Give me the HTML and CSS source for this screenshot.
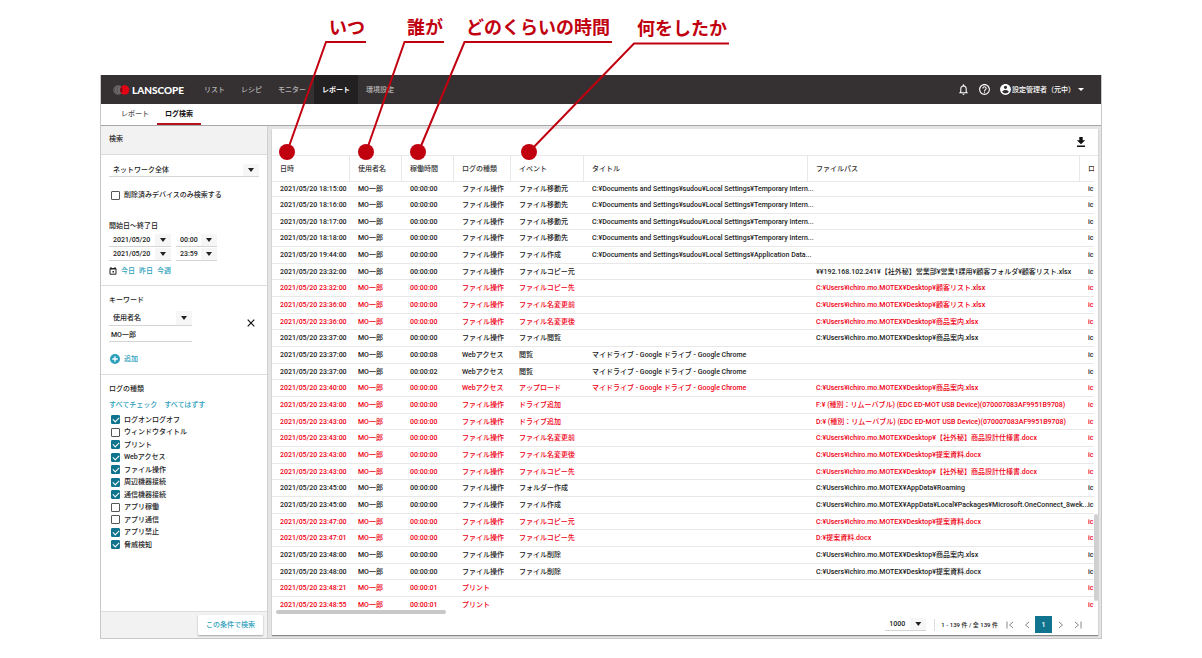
FILE: index.html
```html
<!DOCTYPE html>
<html lang="ja">
<head>
<meta charset="utf-8">
<title>LANSCOPE ログ検索</title>
<link rel="stylesheet" href="styles.css">
</head>
<body>
<div class="stage">
<div class="window">
  <header class="topbar">
    <div class="brand">
      <svg class="brand-mark" viewBox="0 0 17 10" aria-hidden="true">
        <circle cx="5" cy="5" r="4.700" fill="#6b696a"/>
        <path d="M3.800 1A4.700 4.700 0 0 0 3.800 9M6 1.200A4.700 4.700 0 0 0 6 8.800" fill="none" stroke="#454142" stroke-width=".6"/>
        <circle cx="11.700" cy="5" r="4.700" fill="#f00014"/>
        <path d="M8.350 1.700A4.700 4.700 0 0 1 8.350 8.300A4.700 4.700 0 0 1 8.350 1.700z" fill="#7a0f16"/>
        <path d="M10.800 1.200A4.700 4.700 0 0 1 10.800 8.800M13 1A4.700 4.700 0 0 1 13 9" fill="none" stroke="#b80c18" stroke-width=".6"/>
      </svg>
      <span class="brand-name">LANSCOPE</span>
    </div>
    <nav class="nav">
      <a href="#">リスト</a><a href="#">レシピ</a><a href="#">モニター</a><a href="#" class="active">レポート</a><a href="#">環境設定</a>
    </nav>
    <div class="account">
      <button class="icon-btn" aria-label="通知"><svg class="ic13" viewBox="0 0 24 24"><path fill="#fff" d="M12 22c1.100 0 2-.9 2-2h-4c0 1.100.9 2 2 2zm6-6v-5c0-3.070-1.630-5.640-4.500-6.320V4c0-.83-.67-1.500-1.500-1.500s-1.500.67-1.500 1.500v.68C7.640 5.360 6 7.920 6 11v5l-2 2v1h16v-1l-2-2zm-2 1H8v-6c0-2.480 1.510-4.500 4-4.500s4 2.020 4 4.500v6z"/></svg></button>
      <button class="icon-btn" aria-label="ヘルプ"><svg class="ic13" viewBox="0 0 24 24"><path fill="#fff" d="M11 18h2v-2h-2v2zm1-16C6.480 2 2 6.480 2 12s4.480 10 10 10 10-4.480 10-10S17.520 2 12 2zm0 18c-4.410 0-8-3.590-8-8s3.590-8 8-8 8 3.590 8 8-3.590 8-8 8zm0-14c-2.210 0-4 1.790-4 4h2c0-1.100.9-2 2-2s2 .9 2 2c0 2-3 1.750-3 5h2c0-2.250 3-2.500 3-5 0-2.210-1.790-4-4-4z"/></svg></button>
      <button class="user"><svg class="ic13" viewBox="0 0 24 24"><path fill="#fff" d="M12 2C6.480 2 2 6.480 2 12s4.480 10 10 10 10-4.480 10-10S17.520 2 12 2zm0 3c1.660 0 3 1.340 3 3s-1.340 3-3 3-3-1.340-3-3 1.340-3 3-3zm0 14.200c-2.500 0-4.710-1.280-6-3.220.03-1.990 4-3.080 6-3.080 1.990 0 5.970 1.090 6 3.080-1.290 1.940-3.500 3.220-6 3.220z"/></svg><span>設定管理者（元中）</span><svg class="caret" viewBox="0 0 6 3"><path d="M0 0h6L3 3z" fill="#fff"/></svg></button>
    </div>
  </header>
  <nav class="tabs"><a href="#">レポート</a><a href="#" class="active">ログ検索</a></nav>
  <div class="content">
    <aside class="side">
      <h2 class="side-title">検索</h2>
      <section class="block scope">
        <div class="select wide"><select aria-label="ネットワーク"><option>ネットワーク全体</option></select></div>
        <label class="check"><input type="checkbox"><span>削除済みデバイスのみ検索する</span></label>
        <div class="period">
          <h3>開始日〜終了日</h3>
          <div class="line"><div class="select date"><select aria-label="開始日"><option>2021/05/20</option></select></div><div class="select time"><select aria-label="開始時刻"><option>00:00</option></select></div></div>
          <div class="line"><div class="select date"><select aria-label="終了日"><option>2021/05/20</option></select></div><div class="select time"><select aria-label="終了時刻"><option>23:59</option></select></div></div>
          <div class="quick"><svg class="cal" viewBox="0 0 8 8"><path d="M1 1.500h6v5.700H1zM1 2h6" fill="none" stroke="#222"/><path d="M2 0v1.500M6 0v1.500" stroke="#222"/><path d="M3.500 4h1.500v1.500H3.500z" fill="#222"/></svg><a href="#">今日</a><a href="#">昨日</a><a href="#">今週</a></div>
        </div>
      </section>
      <section class="block keyword">
        <h3>キーワード</h3>
        <div class="kw">
          <div class="kw-fields">
            <div class="select key"><select aria-label="項目"><option>使用者名</option></select></div>
            <input class="text" type="text" value="MO一郎" aria-label="キーワード">
          </div>
          <button class="close" aria-label="削除"><svg viewBox="0 0 8 8"><path d="M.7.7l6.600 6.600M7.300.7L.7 7.300" stroke="#111" stroke-width="1.200"/></svg></button>
        </div>
        <button class="add"><svg viewBox="0 0 10 10"><circle cx="5" cy="5" r="5" fill="#2ba0bb"/><path d="M5 2.300v5.400M2.300 5h5.400" stroke="#fff" stroke-width="1.300"/></svg><span>追加</span></button>
      </section>
      <section class="block types">
        <h3>ログの種類</h3>
        <div class="bulk"><a href="#">すべてチェック</a><a href="#">すべてはずす</a></div>
        <div class="checks">
          <label class="check"><input type="checkbox" checked><span>ログオンログオフ</span></label>
          <label class="check"><input type="checkbox"><span>ウィンドウタイトル</span></label>
          <label class="check"><input type="checkbox" checked><span>プリント</span></label>
          <label class="check"><input type="checkbox" checked><span>Webアクセス</span></label>
          <label class="check"><input type="checkbox" checked><span>ファイル操作</span></label>
          <label class="check"><input type="checkbox" checked><span>周辺機器接続</span></label>
          <label class="check"><input type="checkbox" checked><span>通信機器接続</span></label>
          <label class="check"><input type="checkbox"><span>アプリ稼働</span></label>
          <label class="check"><input type="checkbox"><span>アプリ通信</span></label>
          <label class="check"><input type="checkbox" checked><span>アプリ禁止</span></label>
          <label class="check"><input type="checkbox" checked><span>脅威検知</span></label>
        </div>
      </section>
      <div class="side-foot"><button class="submit">この条件で検索</button></div>
    </aside>
    <main class="panel">
      <div class="tools"><button class="icon-btn" aria-label="ダウンロード"><svg class="dl" viewBox="0 0 10 10"><path d="M3.300 0h3.400v3.300H9.200L5 7.300.8 3.300h2.500zM1 8.400h8v1.500H1z" fill="#111"/></svg></button></div>
      <div class="grid">
        <div class="scroll">
        <table>
          <colgroup><col class="c-date"><col class="c-user"><col class="c-dur"><col class="c-type"><col class="c-event"><col class="c-title"><col class="c-path"><col class="c-id"></colgroup>
          <thead><tr><th>日時</th><th>使用者名</th><th>稼働時間</th><th>ログの種類</th><th>イベント</th><th>タイトル</th><th>ファイルパス</th><th>ロ</th></tr></thead>
          <tbody>
<tr><td>2021/05/20 18:15:00</td><td>MO一郎</td><td>00:00:00</td><td>ファイル操作</td><td>ファイル移動元</td><td>C:¥Documents and Settings¥sudou¥Local Settings¥Temporary Intern...</td><td></td><td>ic</td></tr>
<tr><td>2021/05/20 18:16:00</td><td>MO一郎</td><td>00:00:00</td><td>ファイル操作</td><td>ファイル移動先</td><td>C:¥Documents and Settings¥sudou¥Local Settings¥Temporary Intern...</td><td></td><td>ic</td></tr>
<tr><td>2021/05/20 18:17:00</td><td>MO一郎</td><td>00:00:00</td><td>ファイル操作</td><td>ファイル移動元</td><td>C:¥Documents and Settings¥sudou¥Local Settings¥Temporary Intern...</td><td></td><td>ic</td></tr>
<tr><td>2021/05/20 18:18:00</td><td>MO一郎</td><td>00:00:00</td><td>ファイル操作</td><td>ファイル移動先</td><td>C:¥Documents and Settings¥sudou¥Local Settings¥Temporary Intern...</td><td></td><td>ic</td></tr>
<tr><td>2021/05/20 19:44:00</td><td>MO一郎</td><td>00:00:00</td><td>ファイル操作</td><td>ファイル作成</td><td>C:¥Documents and Settings¥sudou¥Local Settings¥Application Data...</td><td></td><td>ic</td></tr>
<tr><td>2021/05/20 23:32:00</td><td>MO一郎</td><td>00:00:00</td><td>ファイル操作</td><td>ファイルコピー元</td><td></td><td>¥¥192.168.102.241¥【社外秘】営業部¥営業1課用¥顧客フォルダ¥顧客リスト.xlsx</td><td>ic</td></tr>
<tr class="alert"><td>2021/05/20 23:32:00</td><td>MO一郎</td><td>00:00:00</td><td>ファイル操作</td><td>ファイルコピー先</td><td></td><td>C:¥Users¥ichiro.mo.MOTEX¥Desktop¥顧客リスト.xlsx</td><td>ic</td></tr>
<tr class="alert"><td>2021/05/20 23:36:00</td><td>MO一郎</td><td>00:00:00</td><td>ファイル操作</td><td>ファイル名変更前</td><td></td><td>C:¥Users¥ichiro.mo.MOTEX¥Desktop¥顧客リスト.xlsx</td><td>ic</td></tr>
<tr class="alert"><td>2021/05/20 23:36:00</td><td>MO一郎</td><td>00:00:00</td><td>ファイル操作</td><td>ファイル名変更後</td><td></td><td>C:¥Users¥ichiro.mo.MOTEX¥Desktop¥商品案内.xlsx</td><td>ic</td></tr>
<tr><td>2021/05/20 23:37:00</td><td>MO一郎</td><td>00:00:00</td><td>ファイル操作</td><td>ファイル閲覧</td><td></td><td>C:¥Users¥ichiro.mo.MOTEX¥Desktop¥商品案内.xlsx</td><td>ic</td></tr>
<tr><td>2021/05/20 23:37:00</td><td>MO一郎</td><td>00:00:08</td><td>Webアクセス</td><td>閲覧</td><td>マイドライブ - Google ドライブ - Google Chrome</td><td></td><td>ic</td></tr>
<tr><td>2021/05/20 23:37:00</td><td>MO一郎</td><td>00:00:02</td><td>Webアクセス</td><td>閲覧</td><td>マイドライブ - Google ドライブ - Google Chrome</td><td></td><td>ic</td></tr>
<tr class="alert"><td>2021/05/20 23:40:00</td><td>MO一郎</td><td>00:00:00</td><td>Webアクセス</td><td>アップロード</td><td>マイドライブ - Google ドライブ - Google Chrome</td><td>C:¥Users¥ichiro.mo.MOTEX¥Desktop¥商品案内.xlsx</td><td>ic</td></tr>
<tr class="alert"><td>2021/05/20 23:43:00</td><td>MO一郎</td><td>00:00:00</td><td>ファイル操作</td><td>ドライブ追加</td><td></td><td>F:¥ (種別：リムーバブル) (EDC ED-MOT USB Device)(070007083AF9951B9708)</td><td>ic</td></tr>
<tr class="alert"><td>2021/05/20 23:43:00</td><td>MO一郎</td><td>00:00:00</td><td>ファイル操作</td><td>ドライブ追加</td><td></td><td>D:¥ (種別：リムーバブル) (EDC ED-MOT USB Device)(070007083AF9951B9708)</td><td>ic</td></tr>
<tr class="alert"><td>2021/05/20 23:43:00</td><td>MO一郎</td><td>00:00:00</td><td>ファイル操作</td><td>ファイル名変更前</td><td></td><td>C:¥Users¥ichiro.mo.MOTEX¥Desktop¥【社外秘】商品設計仕様書.docx</td><td>ic</td></tr>
<tr class="alert"><td>2021/05/20 23:43:00</td><td>MO一郎</td><td>00:00:00</td><td>ファイル操作</td><td>ファイル名変更後</td><td></td><td>C:¥Users¥ichiro.mo.MOTEX¥Desktop¥提案資料.docx</td><td>ic</td></tr>
<tr class="alert"><td>2021/05/20 23:43:00</td><td>MO一郎</td><td>00:00:00</td><td>ファイル操作</td><td>ファイルコピー先</td><td></td><td>C:¥Users¥ichiro.mo.MOTEX¥Desktop¥【社外秘】商品設計仕様書.docx</td><td>ic</td></tr>
<tr><td>2021/05/20 23:45:00</td><td>MO一郎</td><td>00:00:00</td><td>ファイル操作</td><td>フォルダー作成</td><td></td><td>C:¥Users¥ichiro.mo.MOTEX¥AppData¥Roaming</td><td>ic</td></tr>
<tr><td>2021/05/20 23:45:00</td><td>MO一郎</td><td>00:00:00</td><td>ファイル操作</td><td>ファイル作成</td><td></td><td>C:¥Users¥ichiro.mo.MOTEX¥AppData¥Local¥Packages¥Microsoft.OneConnect_8wek...</td><td>ic</td></tr>
<tr class="alert"><td>2021/05/20 23:47:00</td><td>MO一郎</td><td>00:00:00</td><td>ファイル操作</td><td>ファイルコピー元</td><td></td><td>C:¥Users¥ichiro.mo.MOTEX¥Desktop¥提案資料.docx</td><td>ic</td></tr>
<tr class="alert"><td>2021/05/20 23:47:01</td><td>MO一郎</td><td>00:00:00</td><td>ファイル操作</td><td>ファイルコピー先</td><td></td><td>D:¥提案資料.docx</td><td>ic</td></tr>
<tr><td>2021/05/20 23:48:00</td><td>MO一郎</td><td>00:00:00</td><td>ファイル操作</td><td>ファイル削除</td><td></td><td>C:¥Users¥ichiro.mo.MOTEX¥Desktop¥商品案内.xlsx</td><td>ic</td></tr>
<tr><td>2021/05/20 23:48:00</td><td>MO一郎</td><td>00:00:00</td><td>ファイル操作</td><td>ファイル削除</td><td></td><td>C:¥Users¥ichiro.mo.MOTEX¥Desktop¥提案資料.docx</td><td>ic</td></tr>
<tr class="alert"><td>2021/05/20 23:48:21</td><td>MO一郎</td><td>00:00:01</td><td>プリント</td><td></td><td></td><td></td><td>ic</td></tr>
<tr class="alert"><td>2021/05/20 23:48:55</td><td>MO一郎</td><td>00:00:01</td><td>プリント</td><td></td><td></td><td></td><td>ic</td></tr>
          </tbody>
        </table>
        </div>
        <div class="bar-x"></div>
        <div class="bar-y"></div>
      </div>
      <footer class="pager">
        <div class="select size"><select aria-label="表示件数"><option>1000</option></select></div>
        <span class="range">1 - 139 件 / 全 139 件</span>
        <div class="pages">
          <button aria-label="最初"><svg viewBox="0 0 8 8"><path d="M1 .5v7M7 1L3.500 4 7 7"/></svg></button>
          <button aria-label="前へ"><svg viewBox="0 0 8 8"><path d="M6 1L2.500 4 6 7"/></svg></button>
          <button class="current">1</button>
          <button aria-label="次へ"><svg viewBox="0 0 8 8"><path d="M2 1l3.500 3L2 7"/></svg></button>
          <button aria-label="最後"><svg viewBox="0 0 8 8"><path d="M1 1l3.500 3L1 7M7 .5v7"/></svg></button>
        </div>
      </footer>
    </main>
  </div>
</div>
<svg class="leaders" width="760" height="170" viewBox="0 0 760 170" aria-hidden="true">
  <g fill="none" stroke="#c1000f" stroke-width="2">
    <path d="M366 42H326L287 152"/><path d="M444 42H404.500L366 152"/><path d="M612 42H464.500L418.500 152"/><path d="M729 43.500H634L529 152"/>
  </g>
  <g fill="#c1000f"><circle cx="287" cy="152" r="8"/><circle cx="366" cy="152" r="8"/><circle cx="418" cy="152" r="8"/><circle cx="529" cy="152" r="8"/></g>
</svg>
<span class="note note-when">いつ</span>
<span class="note note-who">誰が</span>
<span class="note note-long">どのくらいの時間</span>
<span class="note note-what">何をしたか</span>
</div>
</body>
</html>
```
FILE: styles.css
```css
* { box-sizing: border-box; }
body {
  margin: 0;
  background: #fff;
  color: #222;
  font: 500 7px/12px Roboto, "Noto Sans CJK JP", sans-serif;
}
button, input, select { font: inherit; color: inherit; margin: 0; padding: 0; border: 0; background: none; border-radius: 0; }
button { cursor: pointer; }
a { color: inherit; text-decoration: none; }
h2, h3 { margin: 0; font: inherit; }
svg { display: block; flex: none; }

.stage { position: relative; min-height: 100vh; padding: 75px 100px 19px; display: flex; }
.window { flex: 1; min-width: 0; display: flex; flex-direction: column; border: 1px solid #c8c8c8; border-top: 0; background: #e4e4e4; }

.topbar { display: flex; align-items: stretch; height: 29px; background: #353132; color: #fff; }
.brand { display: flex; align-items: center; gap: 2px; width: 95px; padding-left: 12px; }
.brand-mark { width: 17px; height: 10px; }
.brand-name { font: 900 10px/12px Lato, sans-serif; }
.nav { display: flex; color: #b5b3b3; }
.nav a { display: flex; align-items: center; padding: 0 8px; }
.nav .active { background: #232021; color: #fff; font-weight: 700; }
.account { display: flex; align-items: center; gap: 8px; margin-left: auto; padding-right: 17px; }
.icon-btn { display: block; }
.ic13 { width: 13px; height: 13px; }
.user { display: flex; align-items: center; }
.caret { width: 6px; height: 3px; margin-left: 3px; }

.tabs { display: flex; height: 22px; padding-left: 12px; background: #fff; border-bottom: 1px solid #a8a8a8; color: #555; }
.tabs a { display: flex; align-items: center; padding: 0 8px; border-bottom: 2px solid transparent; }
.tabs .active { color: #111; font-weight: 700; border-color: #b5121b; }

.content { flex: 1; display: flex; min-height: 0; }
.side { display: flex; flex-direction: column; width: 167px; background: #fff; border-right: 1px solid #d0d0d0; }
.side-title { height: 29px; padding: 7px 8px; background: #f2f2f2; border-bottom: 1px solid #dcdcdc; }
.block { padding: 8px; border-bottom: 1px solid #dcdcdc; }
.select { display: grid; border-bottom: 1px solid #d4d4d4; background: linear-gradient(#f6f6f6, #f6f6f6) right / 16px 100% no-repeat; }
.select select { grid-area: 1 / 1; appearance: none; width: 100%; height: 12px; padding-left: 4px; outline: 0; }
.select::after {
  content: ""; grid-area: 1 / 1; justify-self: end; width: 16px; height: 12px; pointer-events: none;
  background: #222; clip-path: polygon(5px 4px, 11px 4px, 8px 8px);
}
.wide { width: 150px; }
.date { width: 62px; }
.time { width: 41px; }
.key { width: 83px; padding: 1px 0; }
.scope { height: 131px; padding-top: 9px; }
.check { display: flex; align-items: center; gap: 4px; padding-left: 2px; }
.check input {
  appearance: none; display: grid; place-items: center; width: 9px; height: 9px;
  border: 1px solid #555; border-radius: 1px; background: #fff;
}
.check input:checked { border-color: #10748f; background: #10748f; }
.check input:checked::after { content: ""; width: 5px; height: 3px; margin-bottom: 1px; border: solid #fff; border-width: 0 0 1px 1px; rotate: -45deg; }
.scope > .check { margin-top: 12px; }
.period { margin-top: 19px; }
.line { display: flex; gap: 5px; margin-top: 1px; }
.period h3 + .line { margin-top: 2px; }
.quick { display: flex; align-items: center; gap: 4px; margin-top: 4px; color: #2ba0bb; }
.cal { width: 8px; height: 8px; }
.keyword { height: 89px; }
.kw { display: flex; align-items: flex-start; justify-content: space-between; margin-top: 5px; padding-right: 4px; }
.text { display: block; width: 83px; height: 16px; padding-left: 2px; border-bottom: 1px solid #d4d4d4; outline: 0; }
.close { padding-top: 8px; }
.close svg { width: 8px; height: 8px; }
.add { display: flex; align-items: center; gap: 4px; margin-top: 11px; padding-left: 1px; color: #2ba0bb; }
.add svg { width: 10px; height: 10px; }
.types { flex: 1; border-bottom: 0; }
.bulk { display: flex; gap: 7px; margin-top: 4px; color: #2ba0bb; }
.checks { display: grid; gap: 0; margin-top: 2px; }
.checks .check { height: 13px; }
.checks .check:nth-child(even) { height: 12px; }
.side-foot { display: flex; justify-content: flex-end; padding: 3px 4px; background: #f2f2f2; border-top: 1px solid #dcdcdc; }
.submit { width: 65px; height: 20px; background: #fff; color: #2ba0bb; box-shadow: 0 1px 2px #0005; border-radius: 1px; }

.panel { flex: 1; min-width: 0; display: flex; flex-direction: column; margin: 3px 3px 3px 4px; background: #fff; box-shadow: 0 1px 1px #0006; }
.tools { display: flex; justify-content: flex-end; align-items: center; height: 27px; padding-right: 12px; border-bottom: 1px solid #e8e8e8; }
.dl { width: 10px; height: 10px; }
.grid { position: relative; flex: 1; min-height: 0; padding-right: 4px; }
.scroll { overflow: hidden; }
table { width: 100%; border-collapse: separate; border-spacing: 0; table-layout: fixed; }
.c-date { width: 78px; }
.c-user, .c-dur { width: 52px; }
.c-type { width: 57px; }
.c-event { width: 73px; }
.c-title { width: 224px; }
.c-id { width: 14px; }
th { height: 26px; padding: 0 0 0 8px; font-weight: 500; text-align: left; border-right: 1px solid #e8e8e8; border-bottom: 1px solid #e8e8e8; white-space: nowrap; color: #333; }
th:last-child { border-right: 0; overflow: hidden; }
td { height: 17px; padding: 0 0 0 8px; border-bottom: 1px solid #e8e8e8; line-height: 12px; white-space: nowrap; }
tr:nth-child(3n) td { height: 16px; }
tbody tr:first-child td { height: 15px; }
tbody tr:last-child td { height: 16px; border-bottom: 0; }
td:last-child { overflow: hidden; }
.alert { color: #f00014; }
.bar-x { position: absolute; left: 4px; bottom: 0; width: 170px; height: 4px; border-radius: 2px; background: #c8c8c8; }
.bar-y { position: absolute; right: 0; bottom: 13px; width: 4px; height: 87px; border-radius: 2px; background: #d0d0d0; }

.pager { display: flex; align-items: center; justify-content: flex-end; height: 21px; padding-right: 16px; }
.size { width: 41px; margin-right: 8px; }
.range { padding-left: 6px; border-left: 1px solid #ddd; font-size: 6px; }
.pages { display: flex; align-items: center; gap: 8px; margin-left: 7px; }
.pages button { display: grid; place-items: center; width: 9px; height: 17px; }
.pages svg { width: 8px; height: 8px; fill: none; stroke: #888; }
.pages .current { width: 17px; margin: 0 -4px; background: #10748f; color: #fff; }

.leaders { position: absolute; left: 0; top: 0; pointer-events: none; }
.note { position: absolute; top: 14px; color: #c1000f; font: 700 18px/24px "Noto Sans CJK JP", sans-serif; white-space: nowrap; }
.note-when { left: 329px; }
.note-who { left: 407px; }
.note-long { left: 466px; }
.note-what { left: 637px; top: 15px; }
```
